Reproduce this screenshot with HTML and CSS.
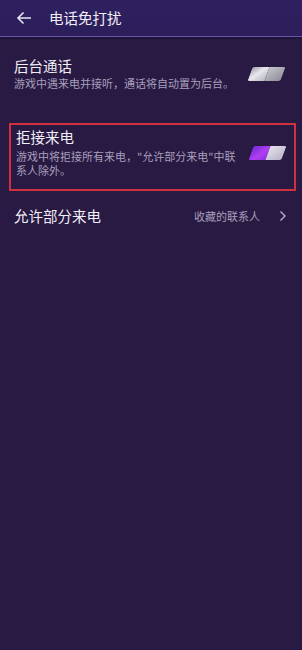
FILE: index.html
```html
<!DOCTYPE html>
<html>
<head>
    <meta name="viewport" content="width=device-width, initial-scale=1.0">
    <title>电话免打扰</title>
    <link rel="stylesheet" href="styles.css">
</head>
<body>
    <div class="topbar">
        <svg class="back" width="16" height="14" viewBox="0 0 16 14">
            <path d="M15 7H2M7.5 1.5L2 7l5.5 5.5" fill="none" stroke="#e8e4f2" stroke-width="1.6"/>
        </svg>
        <span class="title">电话免打扰</span>
    </div>

    <div class="row first">
        <div class="text">
            <div class="name">后台通话</div>
            <div class="desc">游戏中遇来电并接听，通话将自动置为后台。</div>
        </div>
        <div class="switch">
            <span class="half left"></span><span class="half right"></span>
        </div>
    </div>

    <div class="row boxed">
        <div class="text">
            <div class="name">拒接来电</div>
            <div class="desc">游戏中将拒接所有来电，"允许部分来电"中联系人除外。</div>
        </div>
        <div class="switch on">
            <span class="half left"></span><span class="half right"></span>
        </div>
    </div>

    <div class="row link">
        <div class="name big">允许部分来电</div>
        <span class="value">收藏的联系人</span>
        <svg class="chevron" width="8" height="12" viewBox="0 0 8 12">
            <path d="M1.5 1.5L6 6l-4.5 4.5" fill="none" stroke="#b8b0cc" stroke-width="1.4"/>
        </svg>
    </div>
</body>
</html>
```

FILE: styles.css
```css
body {
    margin: 0;
    width: 302px;
    height: 650px;
    background-color: #291a43;
    font-family: "Noto Sans CJK SC", "Noto Sans", sans-serif;
    color: #f1eef7;
    overflow: hidden;
}
.topbar {
    height: 36px;
    display: flex;
    align-items: center;
    padding-left: 16px;
    background: linear-gradient(#2f2160, #2c1e5a);
    border-bottom: 1px solid #6a55a8;
    box-shadow: 0 2px 0 #1f1538;
}
.back {
    margin-top: -1px;
}
.title {
    margin-left: 17px;
    margin-top: -2px;
    font-size: 14.5px;
}
.row {
    display: flex;
    align-items: center;
    padding: 0 14px;
}
.first {
    margin-top: 20px;
}
.text {
    flex: 1;
    min-width: 0;
}
.name {
    font-size: 14.5px;
    line-height: 18px;
}
.desc {
    font-size: 11px;
    line-height: 14px;
    color: #a79fbc;
    margin-top: 1px;
    padding-right: 6px;
}
.switch {
    display: flex;
    width: 33px;
    height: 14px;
    transform: skewX(-20deg);
    margin-right: 5px;
    border-radius: 2px;
    overflow: hidden;
}
.half {
    flex: 1;
}
.switch .left {
    background: linear-gradient(135deg, #9e9ea6, #e8e8ee 45%, #b8b8c0);
}
.switch .right {
    background: linear-gradient(135deg, #c4c4cc, #8e8e98);
}
.switch.on .left {
    background: linear-gradient(135deg, #6d2bd8, #b23ff0 60%, #8a32e0);
}
.switch.on .right {
    background: linear-gradient(135deg, #e6e2ee, #b8b2c6);
}
.boxed {
    margin: 33px 6px 0 9px;
    padding: 3px 5px 12px 5px;
    border: 2px solid #d1313f;
}
.boxed .desc {
    margin-top: 3px;
}
.link {
    margin-top: 16px;
    height: 18px;
}
.big {
    flex: 1;
}
.value {
    font-size: 11px;
    color: #a79fbc;
    margin-right: 19px;
}
.chevron {
    margin-right: 1px;
}
```
